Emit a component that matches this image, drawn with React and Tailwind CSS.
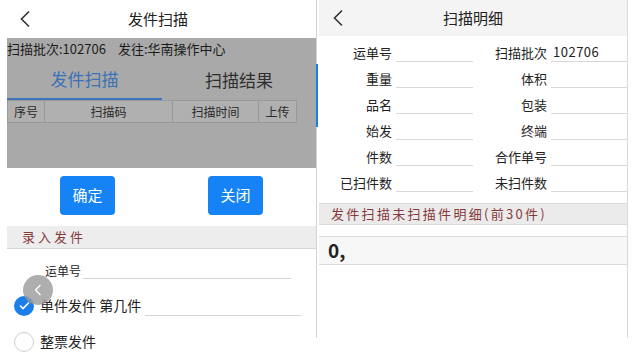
import React from 'react';

const font = { fontFamily: '"Noto Sans CJK SC", "Noto Sans", sans-serif' };

const Back = ({ className }) => (
    <svg className={className} width="12" height="18" viewBox="0 0 12 18" fill="none">
        <path d="M10 1.5L2.5 9l7.5 7.5" stroke="#333" strokeWidth="1.6" />
    </svg>
);

const detailRows = [
    ['运单号', '扫描批次', '102706'],
    ['重量', '体积', ''],
    ['品名', '包装', ''],
    ['始发', '终端', ''],
    ['件数', '合作单号', ''],
    ['已扫件数', '未扫件数', ''],
];

const SendScan = () => (
    <div className='w-[316px] h-[356px] pl-[7px] bg-white relative'>
        {/* header */}
        <div className='h-[38px] -ml-[7px] flex items-center relative'>
            <Back className='ml-[19px]' />
            <div className='absolute inset-x-0 text-center text-[15px] text-[#222]'>发件扫描</div>
        </div>

        {/* dimmed area */}
        <div className='h-[130px] bg-[#a9a9a9]'>
            <div className='h-[22px] flex items-center text-[13px] text-[#1c1c1c]'>
                <span>扫描批次:102706</span>
                <span className='ml-[12px]'>发往:华南操作中心</span>
            </div>
            <div className='h-[40px] flex'>
                <div className='w-[155px] flex items-center justify-center text-[17px] text-[#3b72b6] border-b-2 border-[#3d74bd]'>发件扫描</div>
                <div className='flex-1 flex items-center justify-center text-[17px] text-[#2e2e2e]'>扫描结果</div>
            </div>
            <div className='flex h-[23px] text-[12px] text-[#2a2a2a] bg-[#b0b0b0] w-[290px]'>
                <div className='w-[38px] flex items-center justify-center border border-[#999]'>序号</div>
                <div className='w-[128px] flex items-center justify-center border-y border-r border-[#999]'>扫描码</div>
                <div className='w-[86px] flex items-center justify-center border-y border-r border-[#999]'>扫描时间</div>
                <div className='w-[38px] flex items-center justify-center border-y border-r border-[#999]'>上传</div>
            </div>
        </div>

        {/* buttons */}
        <div className='h-[58px] flex items-start pt-[8px]'>
            <button className='ml-[53px] w-[55px] h-[39px] rounded-[4px] bg-[#1583f5] text-white text-[15px]'>确定</button>
            <button className='ml-[93px] w-[55px] h-[39px] rounded-[4px] bg-[#1583f5] text-white text-[15px]'>关闭</button>
        </div>

        <div className='h-[23px] bg-[#ededed] border-b border-[#d6d6d6] flex items-center pl-[15px] text-[13px] tracking-[3px] text-[#86393b]'>录入发件</div>

        <div className='relative h-[108px]'>
            <div className='absolute left-[38px] top-[14px] flex items-end text-[12px] text-[#222]'>
                <span className='leading-[16px]'>运单号</span>
                <div className='ml-[2px] w-[208px] border-b border-[#d4d4d4] h-[10px]' />
            </div>
            <div className='absolute left-[7px] top-[46px] flex items-center text-[14px] text-[#222]'>
                <div className='w-[20px] h-[20px] rounded-full bg-[#1a7fe9] flex items-center justify-center'>
                    <svg width="11" height="9" viewBox="0 0 11 9" fill="none">
                        <path d="M1 4.5l3 3L10 1.5" stroke="white" strokeWidth="1.6" />
                    </svg>
                </div>
                <span className='ml-[6px]'>单件发件 第几件</span>
                <div className='ml-[4px] w-[156px] border-b border-[#d4d4d4] self-end h-[10px]' />
            </div>
            <div className='absolute left-[7px] top-[82px] flex items-center text-[14px] text-[#222]'>
                <div className='w-[20px] h-[20px] rounded-full border border-[#cfcfcf] bg-white' />
                <span className='ml-[6px]'>整票发件</span>
            </div>
            {/* floating back bubble */}
            <div className='absolute left-[16px] top-[26px] w-[30px] h-[30px] rounded-full bg-[#9a9a9a]/80 flex items-center justify-center'>
                <svg width="8" height="12" viewBox="0 0 8 12" fill="none">
                    <path d="M6.5 1L1.5 6l5 5" stroke="white" strokeWidth="1.3" />
                </svg>
            </div>
        </div>
    </div>
);

const ScanDetail = () => (
    <div className='w-[309px] h-[338px] bg-white border-r border-[#d9d9d9]'>
        <div className='h-[36px] bg-[#f4f4f4] flex items-center relative'>
            <Back className='ml-[13px]' />
            <div className='absolute inset-x-0 text-center text-[15px] text-[#222]'>扫描明细</div>
        </div>
        <div className='h-[167px]'>
            {detailRows.map(([a, b, v]) => (
                <div key={a} className='h-[26px] flex items-end text-[13px] text-[#222]'>
                    <div className='w-[73px] text-right leading-[18px]'>{a}</div>
                    <div className='ml-[4px] w-[77px] h-[18px] border-b border-[#d8d8d8]' />
                    <div className='w-[74px] text-right leading-[18px]'>{b}</div>
                    <div className='ml-[4px] flex-1 h-[18px] border-b border-[#d8d8d8] pl-[2px] leading-[16px] text-[13px] tracking-[0.5px]'>{v}</div>
                </div>
            ))}
        </div>
        <div className='h-[22px] bg-[#ebebeb] border-y border-[#dadada] flex items-center pl-[12px] text-[13px] tracking-[2.3px] text-[#86393b]'>发件扫描未扫描件明细(前30件)</div>
        <div className='h-[11px]' />
        <div className='h-[29px] bg-[#f7f7f7] border-y border-[#dcdcdc] flex items-center pl-[9px] text-[19px] font-bold text-[#222]'>0,</div>
    </div>
);

export default function App() {
    return (
        <div className='w-[637px] h-[356px] bg-white flex overflow-hidden' style={font}>
            <SendScan />
            <div className='w-[1px] h-[338px] bg-[#d3d3d3] relative'>
                <div className='absolute left-0 top-[64px] w-[2px] h-[63px] bg-[#1a7fe9]' />
            </div>
            <div className='w-[2px]' />
            <ScanDetail />
        </div>
    );
}
